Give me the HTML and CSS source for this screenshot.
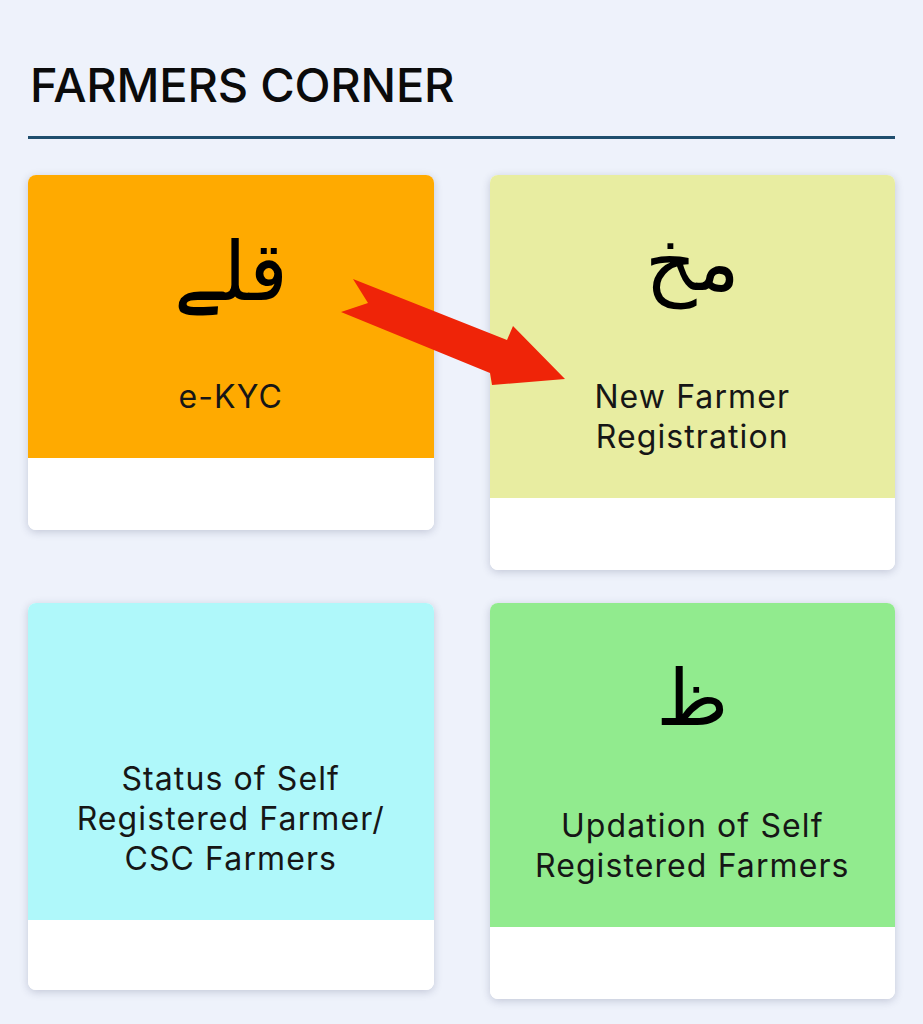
FILE: index.html
```html
<!DOCTYPE html>
<html lang="en">
<head>
<meta charset="utf-8">
<title>Farmers Corner</title>
<link rel="stylesheet" href="styles.css">
</head>
<body>
<div class="page">
  <h1 class="title">FARMERS CORNER</h1>
  <div class="rule"></div>
  <div class="grid">
    <div class="card">
      <div class="card-top orange">
        <div class="icon icon-a" dir="rtl">قلے</div>
        <div class="label">e-KYC</div>
      </div>
      <div class="card-bottom"></div>
    </div>
    <div class="card">
      <div class="card-top lime">
        <div class="icon icon-b" dir="rtl">مخ</div>
        <div class="label">New Farmer<br>Registration</div>
      </div>
      <div class="card-bottom"></div>
    </div>
    <div class="card">
      <div class="card-top cyan">
        <div class="icon icon-empty"></div>
        <div class="label">Status of Self<br>Registered Farmer/<br>CSC Farmers</div>
      </div>
      <div class="card-bottom short"></div>
    </div>
    <div class="card">
      <div class="card-top green">
        <div class="icon icon-c" dir="rtl">ظ</div>
        <div class="label">Updation of Self<br>Registered Farmers</div>
      </div>
      <div class="card-bottom"></div>
    </div>
  </div>
  <svg class="arrow" width="923" height="1024" viewBox="0 0 923 1024" aria-hidden="true">
    <polygon points="353,279 368,303 341,312 490,373 492,385 565,379 513,326 507,340" fill="#ef2408"/>
  </svg>
</div>
</body>
</html>
```
FILE: styles.css
```css
html, body {
  margin: 0;
  padding: 0;
  background: #eef2fb;
}
.page {
  position: relative;
  width: 923px;
  min-height: 1024px;
  padding: 56px 28px 0;
  box-sizing: border-box;
  font-family: Inter, "Noto Sans", "DejaVu Sans", sans-serif;
  color: #111;
}
.title {
  margin: 0 0 0 2px;
  font-size: 47px;
  font-weight: 500;
  line-height: 58px;
  letter-spacing: -0.2px;
  color: #0b0b0b;
}
.rule {
  margin-top: 22px;
  height: 3px;
  background: #1f4e6e;
}
.grid {
  margin-top: 36px;
  display: grid;
  grid-template-columns: 1fr 1fr;
  column-gap: 56px;
  row-gap: 33px;
  align-items: start;
}
.card {
  background: #fff;
  border-radius: 8px;
  overflow: hidden;
  box-shadow: 0 2px 8px rgba(40, 50, 90, 0.22);
}
.card-top {
  padding: 40px 10px 41px;
  display: flex;
  flex-direction: column;
  align-items: center;
}
.orange { background: #ffaa00; }
.lime { background: #e8eda1; }
.cyan { background: #aff8fa; }
.green { background: #91eb8e; padding-top: 41px; }
.icon {
  height: 130px;
  box-sizing: border-box;
  margin-bottom: 32px;
  display: flex;
  align-items: center;
  justify-content: center;
  font-family: "DejaVu Sans", sans-serif;
  font-size: 80px;
  line-height: 1;
  color: #000;
}
.icon-a { padding-bottom: 16px; font-size: 82px; }
.icon-b { padding-bottom: 34px; font-size: 80px; }
.icon-c { padding-bottom: 22px; font-size: 78px; }
.icon-empty {
  height: 84px;
}
.label {
  font-size: 32px;
  line-height: 40px;
  letter-spacing: 1.1px;
  text-align: center;
  color: #161616;
}
.card-bottom {
  height: 72px;
  background: #fff;
}
.card-bottom.short {
  height: 70px;
}
.arrow {
  position: absolute;
  left: 0;
  top: 0;
  pointer-events: none;
}
```
